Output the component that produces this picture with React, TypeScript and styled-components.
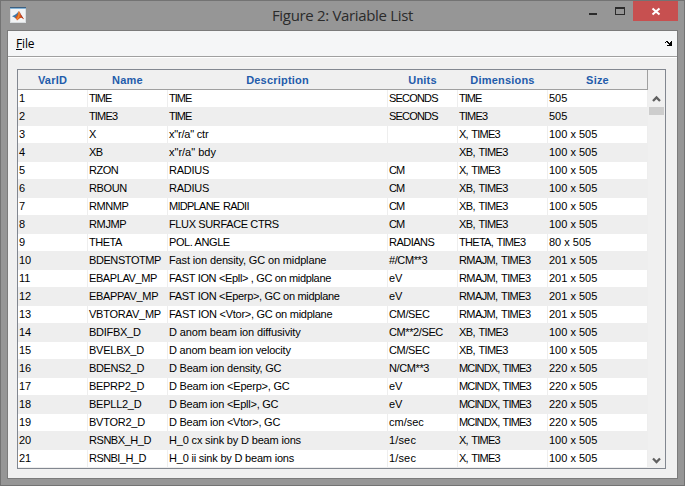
import React from "react";
import styled, { createGlobalStyle } from "styled-components";

const GlobalStyle = createGlobalStyle`
  *, *::before, *::after { box-sizing: border-box; }
  body { margin: 0; overflow: hidden; }
`;

const Window = styled.div`
  display: flex;
  flex-direction: column;
  width: 685px;
  height: 486px;
  padding: 0 6px 6px;
  background: #969696;
  border: 1px solid #737373;
`;

const TitleBar = styled.header`
  display: grid;
  grid-template-columns: 137px 1fr 137px;
  flex: none;
  height: 29px;
`;

const AppIcon = styled.svg`
  width: 16px;
  height: 16px;
  margin: 6px 0 0 3px;
`;

const Title = styled.h1`
  margin: 0;
  text-align: center;
  font: 400 15px/29px "Open Sans", "Noto Sans", sans-serif;
  letter-spacing: -0.33px;
  color: #2b2b2b;
  white-space: nowrap;
`;

const WindowButtons = styled.div`
  display: flex;
  justify-content: flex-end;
`;

const WindowButton = styled.button<{ $width: number; $close?: boolean }>`
  width: ${(p) => p.$width}px;
  height: 20px;
  padding: 0;
  border: 0;
  background: ${(p) => (p.$close ? "#c75050" : "transparent")};

  svg { display: block; }
`;

const Client = styled.main`
  display: flex;
  flex-direction: column;
  flex: 1;
  min-height: 0;
  border: 1px solid #7b7b7b;
  background: #f0f0f0;
`;

const MenuBar = styled.nav`
  display: flex;
  justify-content: space-between;
  flex: none;
  height: 27px;
  padding: 0 5px 0 8px;
  background: #f5f6f7;
  border-bottom: 1px solid #fff;
  box-shadow: inset 0 -1px 0 #a0a0a0;
`;

const MenuItem = styled.span`
  font: 400 12px/25px "Open Sans", "Noto Sans", sans-serif;
  letter-spacing: -0.15px;
  color: #000;
`;

const Mnemonic = styled.span`
  display: inline-block;
  height: 19px;
  border-bottom: 1px solid #000;
`;

const DockArrow = styled.svg`
  width: 7px;
  height: 5px;
  margin-top: 10px;
`;

const TablePanel = styled.section`
  display: flex;
  flex: none;
  width: 649px;
  height: 400px;
  margin: 11px 0 0 9px;
  border: 1px solid #828790;
`;

const Grid = styled.div`
  width: 630px;
  font: 400 11px/16px "Liberation Sans", Arial, sans-serif;
  color: #000;
`;

const columns = "70px 80px 220px 70px 90px 100px";

const HeaderRow = styled.div`
  display: grid;
  grid-template-columns: ${columns};
  height: 20px;
  border-right: 1px solid #a0a0a0;
  border-bottom: 1px solid #a0a0a0;
`;

const HeaderCell = styled.div`
  padding-right: 1px;
  text-align: center;
  font-weight: 700;
  line-height: 21px;
  letter-spacing: 0.2px;
  color: #1f5cab;
`;

const Row = styled.div<{ $striped: boolean }>`
  display: grid;
  grid-template-columns: ${columns};
  height: 18px;
  background: ${(p) => (p.$striped ? "#eee" : "#fff")};
  border-bottom: 1px solid #eee;
`;

const Cell = styled.div<{ $tracking?: number; $wordGap?: number }>`
  padding-left: 1px;
  border-right: 1px solid #eee;
  letter-spacing: ${(p) => p.$tracking ?? 0}px;
  word-spacing: ${(p) => p.$wordGap ?? 0}px;
  white-space: pre;
  overflow: hidden;
`;

const ScrollBar = styled.div`
  display: flex;
  flex-direction: column;
  width: 17px;
  padding: 20px 1px 0;
`;

const ScrollButton = styled.svg`
  flex: none;
  width: 15px;
  height: 17px;
`;

const ScrollTrack = styled.div`
  flex: 1;
`;

const ScrollThumb = styled.div`
  height: 8px;
  background: #cdcdcd;
`;

const headers = ["VarID", "Name", "Description", "Units", "Dimensions", "Size"];

const variables: string[][] = [
  ["TIME", "TIME", "SECONDS", "TIME", "505"],
  ["TIME3", "TIME", "SECONDS", "TIME3", "505"],
  ["X", 'x"r/a" ctr', "", "X, TIME3", "100 x 505"],
  ["XB", 'x"r/a" bdy', "", "XB, TIME3", "100 x 505"],
  ["RZON", "RADIUS", "CM", "X, TIME3", "100 x 505"],
  ["RBOUN", "RADIUS", "CM", "XB, TIME3", "100 x 505"],
  ["RMNMP", "MIDPLANE RADII", "CM", "XB, TIME3", "100 x 505"],
  ["RMJMP", "FLUX SURFACE CTRS", "CM", "XB, TIME3", "100 x 505"],
  ["THETA", "POL. ANGLE", "RADIANS", "THETA, TIME3", "80 x 505"],
  ["BDENSTOTMP", "Fast ion density, GC on midplane", "#/CM**3", "RMAJM, TIME3", "201 x 505"],
  ["EBAPLAV_MP", "FAST ION <Epll> , GC on midplane", "eV", "RMAJM, TIME3", "201 x 505"],
  ["EBAPPAV_MP", "FAST ION <Eperp>, GC on midplane", "eV", "RMAJM, TIME3", "201 x 505"],
  ["VBTORAV_MP", "FAST ION <Vtor>, GC on midplane", "CM/SEC", "RMAJM, TIME3", "201 x 505"],
  ["BDIFBX_D", "D anom beam ion diffusivity", "CM**2/SEC", "XB, TIME3", "100 x 505"],
  ["BVELBX_D", "D anom beam ion velocity", "CM/SEC", "XB, TIME3", "100 x 505"],
  ["BDENS2_D", "D Beam ion density, GC", "N/CM**3", "MCINDX, TIME3", "220 x 505"],
  ["BEPRP2_D", "D Beam ion <Eperp>, GC", "eV", "MCINDX, TIME3", "220 x 505"],
  ["BEPLL2_D", "D Beam ion <Epll>, GC", "eV", "MCINDX, TIME3", "220 x 505"],
  ["BVTOR2_D", "D Beam ion <Vtor>, GC", "cm/sec", "MCINDX, TIME3", "220 x 505"],
  ["RSNBX_H_D", "H_0 cx sink by D beam ions", "1/sec", "X, TIME3", "100 x 505"],
  ["RSNBI_H_D", "H_0 ii sink by D beam ions", "1/sec", "X, TIME3", "100 x 505"],
];

const tracking: Record<string, number> = {
  TIME: -1,
  TIME3: -0.85,
  XB: -0.5,
  RZON: -0.5,
  RBOUN: -0.4,
  RMNMP: -0.4,
  RMJMP: -0.35,
  THETA: -0.5,
  BDENSTOTMP: -0.42,
  EBAPLAV_MP: -0.4,
  EBAPPAV_MP: -0.32,
  VBTORAV_MP: -0.22,
  BDIFBX_D: -0.28,
  BVELBX_D: -0.25,
  BDENS2_D: -0.37,
  BEPRP2_D: -0.3,
  BEPLL2_D: -0.25,
  BVTOR2_D: -0.25,
  RSNBX_H_D: -0.45,
  RSNBI_H_D: -0.55,
  SECONDS: -0.8,
  CM: -1,
  RADIANS: -0.5,
  "#/CM**3": -0.4,
  "CM/SEC": -0.35,
  "CM**2/SEC": -0.4,
  "N/CM**3": -0.4,
  "1/sec": 0.15,
  "X, TIME3": -0.75,
  "XB, TIME3": -0.6,
  "THETA, TIME3": -0.7,
  "RMAJM, TIME3": -0.6,
  "MCINDX, TIME3": -0.86,
  'x"r/a" ctr': -0.2,
  RADIUS: -0.25,
  "MIDPLANE RADII": -0.72,
  "FLUX SURFACE CTRS": -0.37,
  "POL. ANGLE": -0.4,
  "Fast ion density, GC on midplane": -0.14,
  "FAST ION <Epll> , GC on midplane": -0.34,
  "FAST ION <Eperp>, GC on midplane": -0.32,
  "FAST ION <Vtor>, GC on midplane": -0.27,
  "D anom beam ion diffusivity": -0.12,
  "D anom beam ion velocity": -0.2,
  "D Beam ion density, GC": -0.22,
  "D Beam ion <Eperp>, GC": -0.22,
  "D Beam ion <Epll>, GC": -0.24,
  "D Beam ion <Vtor>, GC": -0.24,
  "H_0 cx sink by D beam ions": -0.17,
  "H_0 ii sink by D beam ions": -0.2,
};

const wordGap = (value: string) =>
  value.endsWith(", TIME3") || value === "MIDPLANE RADII" ? 1.2 : 0;

export default function App() {
  return (
    <>
      <GlobalStyle />
      <Window>
        <TitleBar>
          <AppIcon viewBox="0 0 16 16">
            <rect x="0.5" y="0.5" width="15" height="15" fill="#f1f3f4" stroke="#d9dde0" />
            <rect width="16" height="1" fill="#3c5f80" />
            <rect y="1" width="16" height="1" fill="#86b5d8" />
            <path d="M2 9.3 5 7.8 7 6.2 8.8 4 7.6 9.8 5.6 11.4 4.2 10.2Z" fill="#3b78a8" />
            <path d="M5 11 7.3 8 9 4 10 6 11.5 9 14 12.3 11.6 10.8 9.8 11.2 7 13.5 6 11.3Z" fill="#d95319" />
            <path d="M8.8 4 9.8 6.5 9.4 10 7.3 13 6.8 11.6 8.2 8.5Z" fill="#ef8d2e" />
            <path d="M9.4 4.2 11.3 8 14 12.3 11.6 10.5Z" fill="#9c2d20" />
          </AppIcon>
          <Title>Figure 2: Variable List</Title>
          <WindowButtons>
            <WindowButton $width={28} aria-label="Minimize">
              <svg width="28" height="20" shapeRendering="crispEdges">
                <rect x="9" y="12" width="8" height="2" fill="#2b2b2b" />
              </svg>
            </WindowButton>
            <WindowButton $width={25} aria-label="Maximize">
              <svg width="25" height="20" shapeRendering="crispEdges">
                <path d="M7 6H17V14H7ZM8 8V13H16V8Z" fill="#2b2b2b" fillRule="evenodd" />
              </svg>
            </WindowButton>
            <WindowButton $width={45} $close aria-label="Close">
              <svg width="45" height="20">
                <path d="M19.5 7.5 26.5 13.5M26.5 7.5 19.5 13.5" stroke="#fff" strokeWidth="2.1" />
              </svg>
            </WindowButton>
          </WindowButtons>
        </TitleBar>
        <Client>
          <MenuBar>
            <MenuItem>
              <Mnemonic>F</Mnemonic>ile
            </MenuItem>
            <DockArrow viewBox="0 0 7 5" shapeRendering="crispEdges">
              <path d="M1 0H3V1H4V2H5V1H6V0H7V5H2V4H4V3H3V2H2V1H1V2H0V1H1Z" fill="#000" />
            </DockArrow>
          </MenuBar>
          <TablePanel>
            <Grid>
              <HeaderRow>
                {headers.map((h) => (
                  <HeaderCell key={h}>{h}</HeaderCell>
                ))}
              </HeaderRow>
              {variables.map((row, i) => (
                <Row key={row[0]} $striped={i % 2 === 1}>
                  <Cell>{i + 1}</Cell>
                  {row.map((value, c) => (
                    <Cell key={c} $tracking={tracking[value]} $wordGap={wordGap(value)}>
                      {value}
                    </Cell>
                  ))}
                </Row>
              ))}
            </Grid>
            <ScrollBar>
              <ScrollButton>
                <path d="M4 11 7.5 7.5 11 11" fill="none" stroke="#606060" strokeWidth="2.3" />
              </ScrollButton>
              <ScrollTrack>
                <ScrollThumb />
              </ScrollTrack>
              <ScrollButton>
                <path d="M4 7.5 7.5 11 11 7.5" fill="none" stroke="#606060" strokeWidth="2.3" />
              </ScrollButton>
            </ScrollBar>
          </TablePanel>
        </Client>
      </Window>
    </>
  );
}
